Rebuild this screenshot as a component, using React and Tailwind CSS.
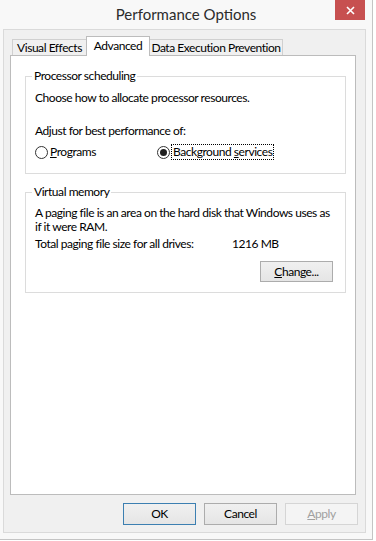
import React from "react";

const font = { fontFamily: 'Lato, "Noto Sans", sans-serif' };

function Radio({ checked }) {
  return (
    <svg width="13" height="13" viewBox="0 0 13 13" className="shrink-0">
      <circle cx="6.5" cy="6.5" r="6" fill="#ffffff" stroke="#333333" strokeWidth="1" />
      {checked && <circle cx="6.5" cy="6.5" r="3.5" fill="#1f1f1f" />}
    </svg>
  );
}

function Button({ children, primary, disabled, className = "" }) {
  const border = primary
    ? "border-[#3c7fb1]"
    : disabled
    ? "border-[#d5d5d5]"
    : "border-[#acacac]";
  const bg = disabled
    ? "bg-[#f4f4f4]"
    : "bg-[linear-gradient(#f0f0f0,#e5e5e5)]";
  const color = disabled ? "text-[#a0a0a0]" : "text-[#000000]";
  return (
    <div
      className={`w-[73px] flex items-center justify-center border ${border} ${bg} ${color} text-[12px] leading-[16px] whitespace-nowrap ${className}`}
    >
      {children}
    </div>
  );
}

function Group({ title, children, className = "" }) {
  return (
    <div className={`relative w-[321px] border border-[#dcdcdc] ${className}`}>
      <span className="absolute -top-[9px] left-[6px] bg-white px-[2px] text-[12px] leading-[16px] text-[#000] whitespace-nowrap">
        {title}
      </span>
      {children}
    </div>
  );
}

export default function App() {
  return (
    <div className="w-[376px] h-[541px] bg-white tracking-[-0.45px]" style={font}>
      <div className="relative w-[373px] h-[540px] bg-[#f8f8f8] border-r border-b border-[#c4c4c4] flex flex-col">
        {/* title bar */}
        <div className="h-[29px] flex items-center justify-center">
          <span className="text-[15px] leading-[20px] text-[#2b2b2b] -mt-[1px] whitespace-nowrap tracking-normal">Performance Options</span>
        </div>
        <div className="absolute top-0 right-[7px] w-[30px] h-[20px] bg-[#c75050] flex items-center justify-center">
          <svg width="9" height="9" viewBox="0 0 9 9">
            <path d="M1 1 L8 8 M8 1 L1 8" stroke="#ffffff" strokeWidth="1.6" />
          </svg>
        </div>

        {/* client area */}
        <div className="ml-[3px] w-[363px] h-[504px] border border-[#dadada] bg-[#f0f0f0] flex flex-col pt-[6px] pl-[6px] pr-[7px]">
          {/* tabs */}
          <div className="h-[19px] flex items-end pl-[2px] text-[12px] text-[#000] whitespace-nowrap">
            <div className="w-[74px] h-[16px] border-l border-t border-[#d0d0d0] bg-[#f0f0f0] flex items-center justify-center leading-[15px]">
              Visual Effects
            </div>
            <div className="relative z-10 w-[64px] h-[20px] -mb-[1px] border-l border-t border-r border-[#bcbcbc] bg-white flex items-start justify-center pt-[1px] leading-[15px]">
              Advanced
            </div>
            <div className="w-[133px] h-[16px] border-t border-r border-[#d0d0d0] bg-[#f0f0f0] flex items-center justify-center leading-[15px]">
              Data Execution Prevention
            </div>
          </div>

          {/* panel */}
          <div className="w-[346px] h-[440px] border border-[#bcbcbc] bg-white pt-[20px] pl-[14px] text-[12px] text-[#000]">
            <Group title="Processor scheduling">
              <div className="flex flex-col pl-[9px] pt-[13px] pb-[13px] whitespace-nowrap">
                <div className="leading-[16px]">Choose how to allocate processor resources.</div>
                <div className="leading-[16px] mt-[17px]">Adjust for best performance of:</div>
                <div className="h-[16px] mt-[5px] flex items-center">
                  <div className="w-[122px] flex items-center gap-[2px]">
                    <Radio />
                    <span className="leading-[16px]">
                      <span className="underline">P</span>rograms
                    </span>
                  </div>
                  <div className="flex items-center gap-[2px]">
                    <Radio checked />
                    <span className="leading-[14px] outline outline-1 outline-dotted outline-[#000] px-[1px]">
                      Background <span className="underline">s</span>ervices
                    </span>
                  </div>
                </div>
              </div>
            </Group>

            <Group title="Virtual memory" className="mt-[18px]">
              <div className="flex flex-col pl-[9px] pt-[13px] pb-[10px]">
                <div className="leading-[14px] whitespace-nowrap">
                  A paging file is an area on the hard disk that Windows uses as
                  <br />
                  if it were RAM.
                </div>
                <div className="leading-[14px] mt-[3px] flex whitespace-nowrap">
                  <span className="w-[197px]">Total paging file size for all drives:</span>
                  <span>1216 MB</span>
                </div>
                <Button className="h-[21px] mt-[10px] self-end mr-[12px]">
                  <span>
                    <span className="underline">C</span>hange...
                  </span>
                </Button>
              </div>
            </Group>
          </div>

          {/* bottom buttons */}
          <div className="mt-[8px] flex justify-end gap-[8px]">
            <Button primary className="h-[22px]">OK</Button>
            <Button className="h-[22px]">Cancel</Button>
            <Button disabled className="h-[22px]">
              <span>
                <span className="underline">A</span>pply
              </span>
            </Button>
          </div>
        </div>
      </div>
    </div>
  );
}
